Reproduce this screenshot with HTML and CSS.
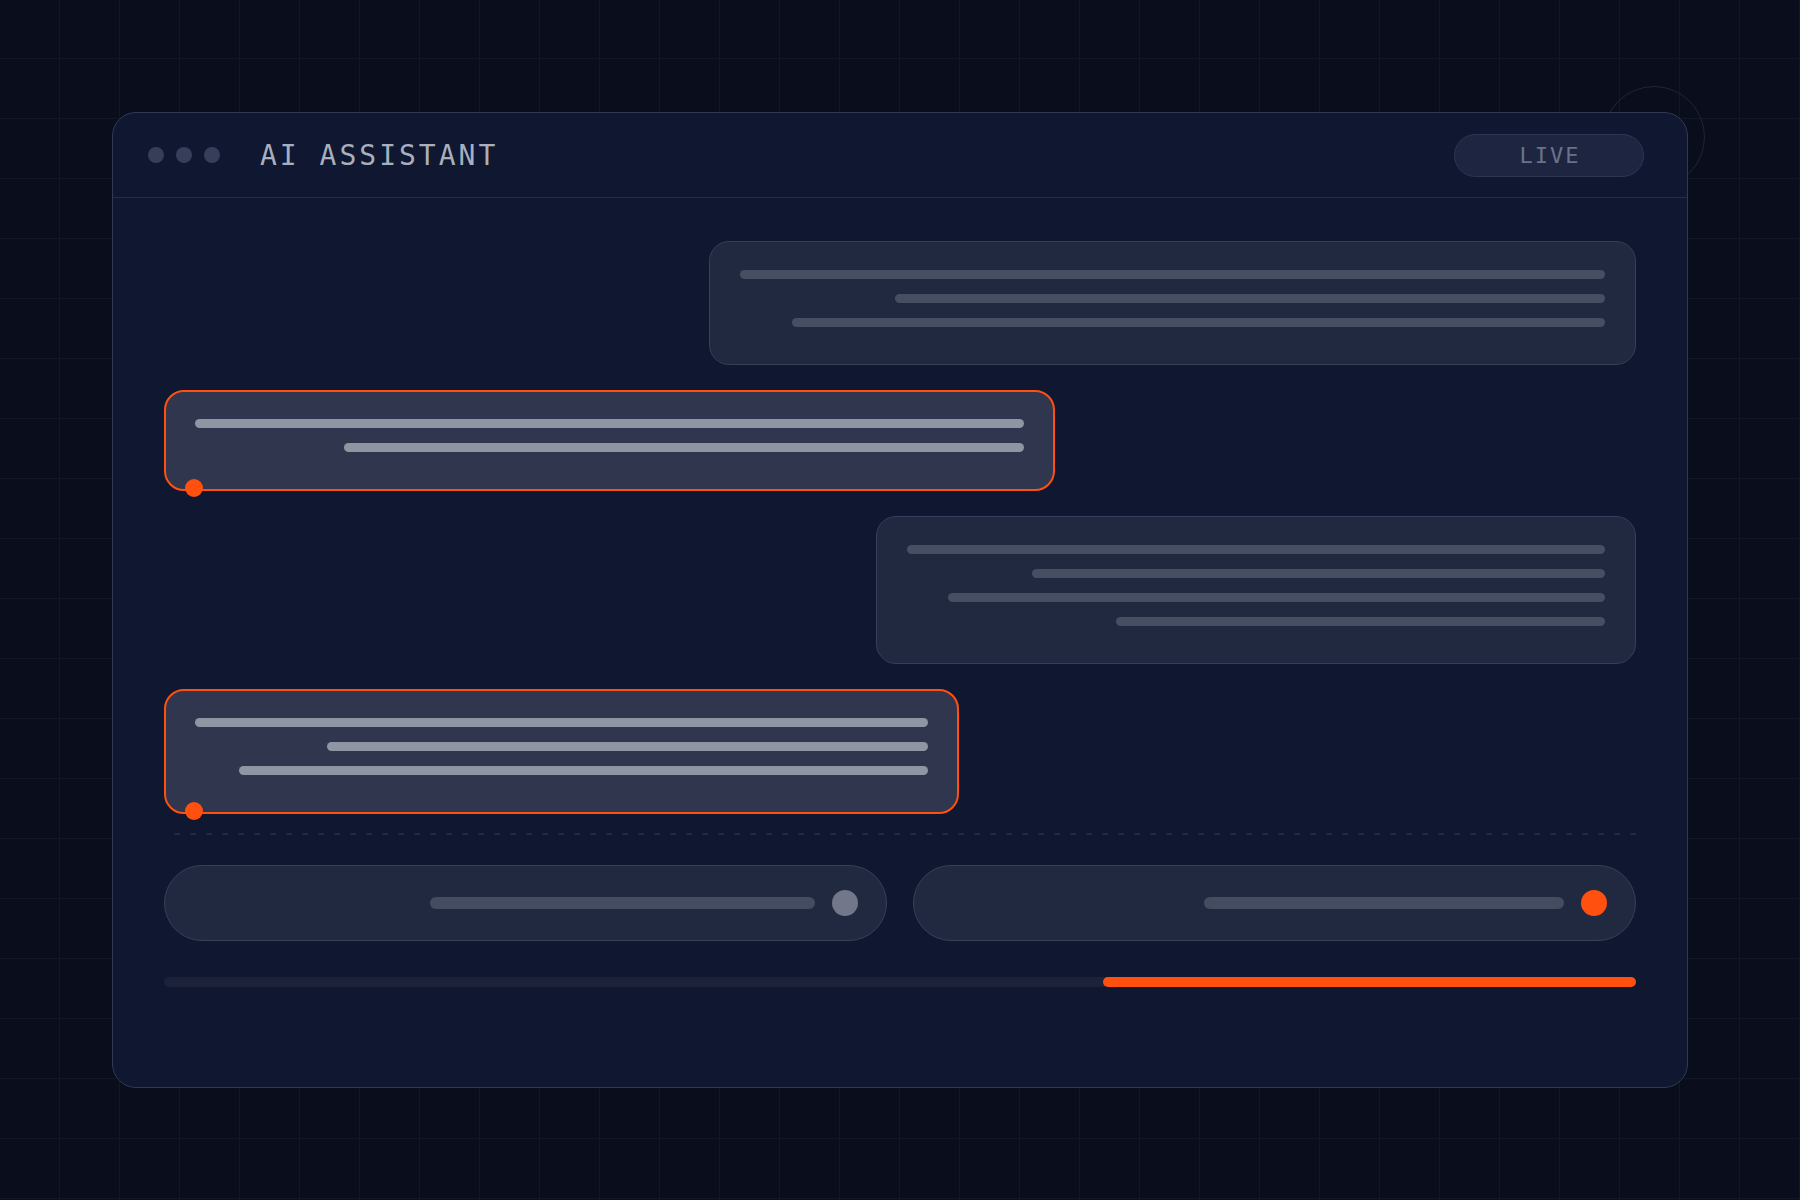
FILE: index.html
```html
<!DOCTYPE html>
<html lang="en">
<head>
  <meta charset="UTF-8" />
  <meta name="viewport" content="width=device-width, initial-scale=1.0" />
  <title>AI Assistant</title>
  <link rel="stylesheet" href="styles.css">
</head>
<body>
  <div class="stage">
    <!-- faint ring peeking out behind the window corner -->
    <div class="ring"></div>

    <div class="window">
      <!-- title bar -->
      <div class="titlebar">
        <div class="dots">
          <span class="dot"></span>
          <span class="dot"></span>
          <span class="dot"></span>
        </div>
        <div class="title">AI ASSISTANT</div>
        <div class="live">LIVE</div>
      </div>

      <div class="chat">
        <!-- message list (placeholder lines stand in for text) -->
        <div class="messages">
          <div class="bubble reply" style="width: 927px">
            <span class="line" style="width: 100%"></span>
            <span class="line" style="width: 710px"></span>
            <span class="line" style="width: 813px"></span>
          </div>

          <div class="bubble prompt" style="width: 891px">
            <span class="line" style="width: 100%"></span>
            <span class="line" style="width: 680px"></span>
            <span class="pin"></span>
          </div>

          <div class="bubble reply" style="width: 760px">
            <span class="line" style="width: 100%"></span>
            <span class="line" style="width: 573px"></span>
            <span class="line" style="width: 657px"></span>
            <span class="line" style="width: 489px"></span>
          </div>

          <div class="bubble prompt" style="width: 795px">
            <span class="line" style="width: 100%"></span>
            <span class="line" style="width: 601px"></span>
            <span class="line" style="width: 689px"></span>
            <span class="pin"></span>
          </div>
        </div>

        <div class="divider"></div>

        <!-- input row -->
        <div class="inputs">
          <div class="field">
            <span class="field-line" style="width: 385px"></span>
            <span class="knob"></span>
          </div>
          <div class="field">
            <span class="field-line" style="width: 360px"></span>
            <span class="knob active"></span>
          </div>
        </div>

        <!-- progress -->
        <div class="track">
          <div class="fill" style="width: 36.2%"></div>
        </div>
      </div>
    </div>
  </div>
</body>
</html>
```

FILE: styles.css
```css
/* page with a faint 60px grid */
body {
  margin: 0;
  height: 1200px;
  background-color: #0a0d1b;
  background-image:
    linear-gradient(90deg, #111727 1px, transparent 1px),
    linear-gradient(0deg, #111727 1px, transparent 1px);
  background-size: 60px 60px;
  background-position: -1px -1px;
  font-family: "DejaVu Sans Mono", "Liberation Mono", monospace;
  display: flex;
  align-items: center;
  justify-content: center;
  overflow: hidden;
}

.stage {
  position: relative;
}

.ring {
  position: absolute;
  left: 1491px;
  top: -26px;
  width: 100px;
  height: 100px;
  border: 1px solid #1f2538;
  border-radius: 50%;
}

/* main window */
.window {
  position: relative;
  z-index: 1;
  width: 1576px;
  height: 976px;
  box-sizing: border-box;
  background-color: #101731;
  border: 1px solid #313953;
  border-radius: 24px;
  display: flex;
  flex-direction: column;
}

.titlebar {
  height: 85px;
  flex-shrink: 0;
  box-sizing: border-box;
  border-bottom: 1px solid #262e47;
  padding: 0 43px 0 35px;
  display: flex;
  align-items: center;
}

.dots {
  display: flex;
  gap: 12px;
}

.dot {
  width: 16px;
  height: 16px;
  border-radius: 50%;
  background-color: #363e5a;
}

.title {
  margin-left: 40px;
  font-size: 28px;
  letter-spacing: 3px;
  color: #a9afbd;
}

.live {
  margin-left: auto;
  width: 190px;
  height: 43px;
  box-sizing: border-box;
  border: 1px solid #2e3652;
  border-radius: 22px;
  background-color: #1d2540;
  color: #6a7288;
  font-size: 22px;
  letter-spacing: 2px;
  display: flex;
  align-items: center;
  justify-content: center;
  padding-left: 2px;
}

/* chat body */
.chat {
  padding: 43px 51px 0;
  display: flex;
  flex-direction: column;
}

.messages {
  display: flex;
  flex-direction: column;
  gap: 25px;
}

.bubble {
  position: relative;
  box-sizing: border-box;
  border-radius: 20px;
  padding: 28px 30px 37px;
  display: flex;
  flex-direction: column;
  align-items: flex-end;
  gap: 15px;
}

.bubble.reply {
  align-self: flex-end;
  background-color: #212940;
  border: 1px solid #363e5a;
}

.bubble.prompt {
  align-self: flex-start;
  background-color: #30364d;
  border: 2px solid #ff5010;
  padding: 27px 29px 37px;
}

.line {
  display: block;
  height: 9px;
  border-radius: 5px;
  background-color: #464f62;
}

.prompt .line {
  background-color: #8f95a3;
}

/* small marker on the prompt bubble edge */
.pin {
  position: absolute;
  left: 19px;
  bottom: -8px;
  width: 18px;
  height: 18px;
  border-radius: 50%;
  background-color: #ff5010;
}

.divider {
  margin: 19px 0 0 10px;
  height: 2px;
  background-image: repeating-linear-gradient(90deg, #222a42 0 6px, transparent 6px 16px);
}

.inputs {
  margin-top: 30px;
  display: flex;
  gap: 26px;
}

.field {
  flex: 1;
  height: 76px;
  box-sizing: border-box;
  border: 1px solid #373f5a;
  border-radius: 38px;
  background-color: #212940;
  padding-right: 28px;
  display: flex;
  align-items: center;
  justify-content: flex-end;
  gap: 17px;
}

.field-line {
  height: 12px;
  border-radius: 6px;
  background-color: #444d5f;
}

.knob {
  width: 26px;
  height: 26px;
  border-radius: 50%;
  background-color: #72778a;
}

.knob.active {
  background-color: #ff5010;
}

.track {
  margin-top: 36px;
  height: 10px;
  border-radius: 5px;
  background-color: #1b2239;
  display: flex;
  justify-content: flex-end;
}

.fill {
  height: 100%;
  border-radius: 5px;
  background-color: #ff5010;
}
```
